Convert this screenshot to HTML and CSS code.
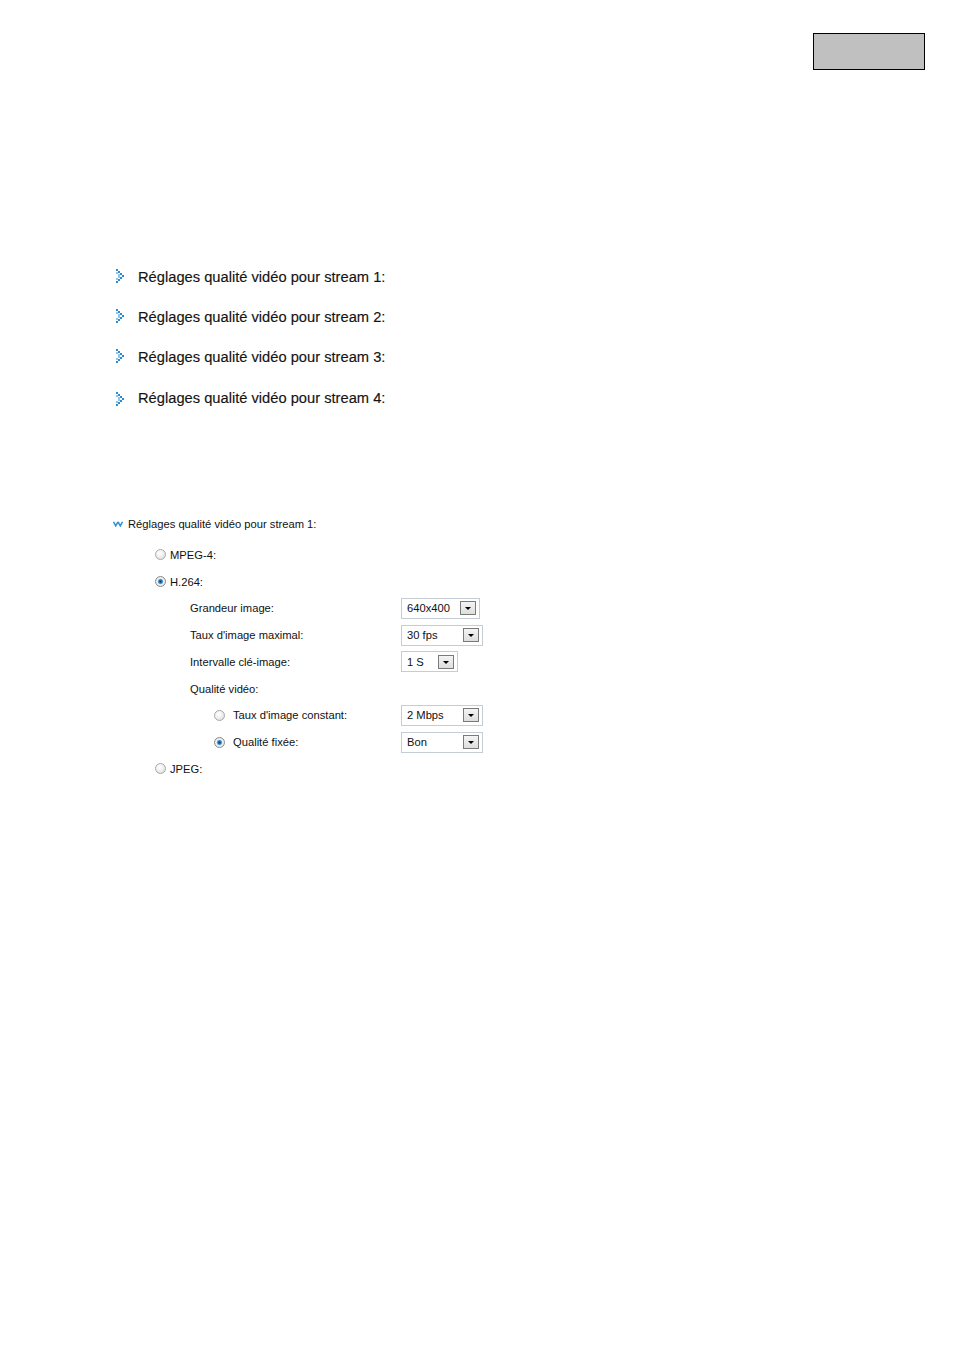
FILE: index.html
```html
<!DOCTYPE html>
<html lang="fr">
<head>
<meta charset="utf-8">
<title>Réglages qualité vidéo</title>
<link rel="stylesheet" href="styles.css">
</head>
<body>
<div class="topbar"><div class="gray-box"></div></div>

<ul class="streams">
  <li class="stream"><svg class="chev" viewBox="0 0 9 14" width="9" height="14"><g><rect x="0" y="0" width="2" height="2"/><rect x="2" y="2" width="2" height="2"/><rect x="4" y="4" width="2" height="2"/><rect x="6" y="6" width="2" height="2"/><rect x="4" y="8" width="2" height="2"/><rect x="2" y="10" width="2" height="2"/><rect x="0" y="12" width="2" height="2"/><rect x="0" y="3" width="2" height="2" class="lt"/><rect x="2" y="5" width="2" height="2" class="lt"/><rect x="2" y="7" width="2" height="2" class="lt"/><rect x="0" y="9" width="2" height="2" class="lt"/></g></svg><span>Réglages qualité vidéo pour stream 1:</span></li>
  <li class="stream"><svg class="chev" viewBox="0 0 9 14" width="9" height="14"><g><rect x="0" y="0" width="2" height="2"/><rect x="2" y="2" width="2" height="2"/><rect x="4" y="4" width="2" height="2"/><rect x="6" y="6" width="2" height="2"/><rect x="4" y="8" width="2" height="2"/><rect x="2" y="10" width="2" height="2"/><rect x="0" y="12" width="2" height="2"/><rect x="0" y="3" width="2" height="2" class="lt"/><rect x="2" y="5" width="2" height="2" class="lt"/><rect x="2" y="7" width="2" height="2" class="lt"/><rect x="0" y="9" width="2" height="2" class="lt"/></g></svg><span>Réglages qualité vidéo pour stream 2:</span></li>
  <li class="stream"><svg class="chev" viewBox="0 0 9 14" width="9" height="14"><g><rect x="0" y="0" width="2" height="2"/><rect x="2" y="2" width="2" height="2"/><rect x="4" y="4" width="2" height="2"/><rect x="6" y="6" width="2" height="2"/><rect x="4" y="8" width="2" height="2"/><rect x="2" y="10" width="2" height="2"/><rect x="0" y="12" width="2" height="2"/><rect x="0" y="3" width="2" height="2" class="lt"/><rect x="2" y="5" width="2" height="2" class="lt"/><rect x="2" y="7" width="2" height="2" class="lt"/><rect x="0" y="9" width="2" height="2" class="lt"/></g></svg><span>Réglages qualité vidéo pour stream 3:</span></li>
  <li class="stream last"><svg class="chev" viewBox="0 0 9 14" width="9" height="14"><g><rect x="0" y="0" width="2" height="2"/><rect x="2" y="2" width="2" height="2"/><rect x="4" y="4" width="2" height="2"/><rect x="6" y="6" width="2" height="2"/><rect x="4" y="8" width="2" height="2"/><rect x="2" y="10" width="2" height="2"/><rect x="0" y="12" width="2" height="2"/><rect x="0" y="3" width="2" height="2" class="lt"/><rect x="2" y="5" width="2" height="2" class="lt"/><rect x="2" y="7" width="2" height="2" class="lt"/><rect x="0" y="9" width="2" height="2" class="lt"/></g></svg><span>Réglages qualité vidéo pour stream 4:</span></li>
</ul>

<div class="detail">
  <div class="detail-head"><svg class="down" viewBox="0 0 10 6" width="10" height="6"><polyline points="0.5,0.8 2.7,4.8 5,0.8" /><polyline points="5,0.8 7.3,4.8 9.5,0.8" /></svg><span>Réglages qualité vidéo pour stream 1:</span></div>

  <div class="form">
    <div class="row"><div class="cell lvl1"><span class="radio"></span><span>MPEG-4:</span></div></div>
    <div class="row"><div class="cell lvl1"><span class="radio on"></span><span>H.264:</span></div></div>
    <div class="row"><div class="cell lvl2">Grandeur image:</div><div class="select w78"><span>640x400</span><span class="btn"></span></div></div>
    <div class="row"><div class="cell lvl2">Taux d'image maximal:</div><div class="select w81"><span>30 fps</span><span class="btn"></span></div></div>
    <div class="row"><div class="cell lvl2">Intervalle clé-image:</div><div class="select w56"><span>1 S</span><span class="btn"></span></div></div>
    <div class="row"><div class="cell lvl2">Qualité vidéo:</div></div>
    <div class="row"><div class="cell lvl3"><span class="radio"></span><span>Taux d'image constant:</span></div><div class="select w81"><span>2 Mbps</span><span class="btn"></span></div></div>
    <div class="row"><div class="cell lvl3"><span class="radio on"></span><span>Qualité fixée:</span></div><div class="select w81"><span>Bon</span><span class="btn"></span></div></div>
    <div class="row"><div class="cell lvl1"><span class="radio"></span><span>JPEG:</span></div></div>
  </div>
</div>
</body>
</html>
```

FILE: styles.css
```css
html, body {
  margin: 0;
  padding: 0;
  background: #ffffff;
}
body {
  font-family: "Liberation Sans", Arial, sans-serif;
  color: #111111;
}

.topbar {
  display: flex;
  justify-content: flex-end;
  padding: 33px 29px 0 0;
}
.gray-box {
  width: 110px;
  height: 35px;
  background: #c0c0c0;
  border: 1px solid #000000;
}

.streams {
  list-style: none;
  margin: 187px 0 0 0;
  padding: 0 0 0 116px;
}
.stream {
  display: flex;
  align-items: center;
  height: 40px;
  font-size: 14.7px;
  color: #141414;
}
.stream.last {
  height: 41px;
  align-items: flex-end;
}
.stream.last span, .stream.last svg {
  margin-bottom: 12px;
}
.stream span {
  margin-left: 13px;
  -webkit-text-stroke: 0.15px #141414;
}
.chev {
  display: block;
  margin-top: -3px;
}
.chev rect {
  fill: #2a8cd2;
}
.chev rect.lt {
  fill: #8cc6ee;
}

.detail {
  margin-top: 96px;
}
.detail-head {
  display: flex;
  align-items: center;
  height: 20px;
  padding-left: 113px;
  font-size: 11.2px;
}
.detail-head span {
  margin-left: 5px;
}
.down {
  display: block;
}
.down polyline {
  fill: none;
  stroke: #2e93d6;
  stroke-width: 1.6;
}

.form {
  margin-top: 7.6px;
  font-size: 11.2px;
}
.row {
  display: grid;
  grid-template-columns: 401px auto;
  align-items: center;
  height: 26.75px;
}
.cell {
  display: flex;
  align-items: center;
  gap: 4px;
}
.lvl1 { padding-left: 155px; }
.lvl2 { padding-left: 190px; }
.lvl3 { padding-left: 214px; gap: 8px; }

.radio {
  width: 9px;
  height: 9px;
  border-radius: 50%;
  border: 1px solid #a9a9a9;
  background: radial-gradient(circle at 40% 35%, #ffffff 0%, #f0f0f0 45%, #d4d4d4 100%);
  box-sizing: content-box;
  flex: none;
}
.radio.on {
  background: radial-gradient(circle, #0b3d6e 0%, #2f7fc4 28%, #7fb4e0 38%, #f4f4f4 50%, #d6d6d6 100%);
  border-color: #8a8a8a;
}

.select {
  box-sizing: border-box;
  height: 21px;
  border: 1px solid #c5ccd6;
  background: #ffffff;
  display: flex;
  align-items: center;
  justify-content: space-between;
  padding: 0 3px 0 5px;
  font-size: 11.2px;
  color: #111111;
}
.w78 { width: 79px; }
.w81 { width: 82px; }
.w56 { width: 57px; }
.btn {
  box-sizing: border-box;
  width: 16px;
  height: 14px;
  border: 1px solid #7a7a7a;
  background: linear-gradient(#f4f4f4, #dedede);
  position: relative;
}
.btn::after {
  content: "";
  position: absolute;
  left: 4px;
  top: 5px;
  border-left: 3px solid transparent;
  border-right: 3px solid transparent;
  border-top: 3px solid #000000;
}
```
